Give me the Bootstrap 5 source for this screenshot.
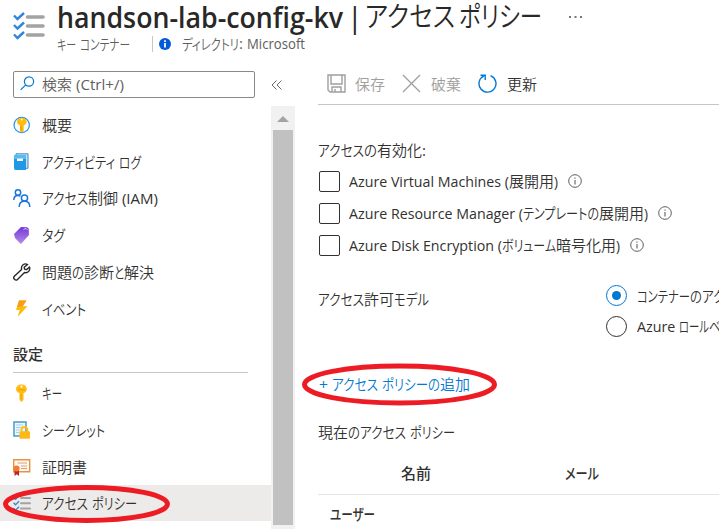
<!DOCTYPE html>
<html lang="ja">
<head>
<meta charset="utf-8">
<title>アクセス ポリシー</title>
<link href="https://cdn.jsdelivr.net/npm/bootstrap@5.3.0/dist/css/bootstrap.min.css" rel="stylesheet">
<style>
body{width:719px;height:529px;overflow:hidden;background:#fff;color:#323130;font:15px/20px "Open Sans","Noto Sans CJK JP",sans-serif}
svg{display:block;flex:none}
.jp{font-family:"Noto Sans CJK JP",sans-serif;font-weight:350}
.run{display:inline-block;white-space:pre;transform-origin:0 50%;font-feature-settings:"palt"}
.line{display:flex;white-space:pre;align-items:center}
.page-head{height:71px;padding-left:13px}
.title-row{height:34px;font-size:28.5px;line-height:34px;color:#292827}
.title-row .jp{margin-top:-5px}
.sub-row{height:18px;font-size:14.5px;line-height:18px;color:#605e5c;padding-top:1px}
.side{width:295px}
.search-box{width:242px;height:27px;border:1px solid #8a8886;border-radius:2px;margin-left:13px;color:#605e5c;padding:0 0 2px 6px}
.menu-area{height:423px;margin-top:8px}
.menu{width:271px}
.item{height:36.8px;padding-left:13px;padding-top:1px}
.item svg{margin-right:11px}
.item.on{background:#edebe9}
.group-name{height:46.4px;margin-left:13px;width:235px;border-bottom:1px solid #c8c6c4;padding-top:10px;margin-bottom:1px}
.track{width:24px;background:#f1f1f1}
.thumb{width:20px;height:395px;background:#c1c1c1}
.pane{width:424px;padding-left:23px}
.tools{height:34px;border-bottom:1px solid #c8c6c4;padding:0 0 8px 9px}
.tools .run{margin-left:9px}
.muted{color:#a19f9d}
.opt{height:32.3px}
.box{width:21px;height:21px;border:1px solid #323130;border-radius:2px;margin-left:1px;margin-right:9px}
.opt .run{margin-top:-1px}
.dot{flex:none;width:21px;height:21px;border:1px solid #323130;border-radius:50%;margin-right:10px}
.dot.sel{border-color:#0078d4}
.dot.sel::after{content:"";width:9px;height:9px;border-radius:50%;background:#0078d4}
.strong{font-weight:600}
.strong .jp{font-weight:500}
.overlay{left:0;top:0;pointer-events:none}
.intro{height:46px;margin-top:22px}
.opts{margin-top:-8px}
.info{margin-left:10px;margin-top:-1px}
.model{margin-top:19px}
.model-name{flex:none;width:288px;height:36px}
.radio-row{height:30.2px}
.add{color:#0078d4;height:20px;margin-top:33px;padding-left:1px}
.now{height:20px;margin-top:28px}
.cols{height:42px;margin-top:11px;padding-left:83px;padding-bottom:1px;border-bottom:1px solid #e5e5e5}
.mail{margin-left:134px}
.users{height:37px;padding-left:12px}
</style>
<script src="https://cdn.jsdelivr.net/npm/bootstrap@5.3.0/dist/js/bootstrap.bundle.min.js"></script>
</head>
<body class="position-relative">
<header class="page-head">
  <div class="d-flex">
    <svg width="32" height="52" viewBox="0 0 32 52"><g fill="none" stroke="#2f86e0" stroke-width="2.4"><path d="M1 15.500l3.500 3.500L11 13M1 25l3.500 3.500L11 22.500M1 34.500l3.500 3.500L11 32"/></g><path d="M14.500 17H30M14.500 26H30M14.500 35H30" stroke="#a3a3a3" stroke-width="3.600" stroke-linecap="round"/></svg>
    <div class="ms-2 ps-1">
      <div class="title-row line"><span class="run strong" data-w="286">handson-lab-config-kv</span><span class="run ms-1" data-w="15.7">|</span><svg width="2" height="1"></svg><span class="run jp" data-w="90">アクセス</span><span class="run jp ms-1" data-w="83">ポリシー</span><svg class="ms-4" width="20" height="4" viewBox="0 0 20 4"><path d="M3 1h2v2H3zM8.500 1h2v2h-2zM14 1h2v2h-2z" fill="#777"/></svg></div>
      <div class="sub-row line"><span class="run jp" data-w="19">キー</span><span class="run jp ms-1" data-w="50">コンテナー</span><svg width="29" height="18" viewBox="0 0 29 18"><path d="M22.500 1v16" stroke="#c8c6c4"/></svg><svg width="12" height="12" viewBox="0 0 12 12"><circle cx="6" cy="6" r="6" fill="#015cda"/><path d="M6 5v4.500M6 2.200v1.800" stroke="#fff" stroke-width="1.800"/></svg><svg width="11" height="1"></svg><span class="run jp" data-w="57">ディレクトリ</span><span class="run" data-w="8">: </span><span class="run" data-w="58">Microsoft</span></div>
    </div>
  </div>
</header>
<div class="d-flex">
<nav class="side">
  <div class="d-flex align-items-center">
    <div class="search-box line"><svg width="15" height="15" viewBox="0 0 15 15" fill="none" stroke="#0078d4" stroke-width="1.200"><circle cx="9" cy="5.500" r="4.600"/><path d="M5.700 8.800L.7 13.800"/></svg><svg width="7" height="1"></svg><span class="run jp" data-w="30">検索</span><span class="run" data-w="52"> (Ctrl+/)</span></div>
    <svg class="ms-3" width="12" height="12" viewBox="0 0 12 12" fill="none" stroke="#69676a"><path d="M5.500 1.500L1 6l4.500 4.500M10.500 1.500L6 6l4.500 4.500"/></svg>
  </div>
  <div class="menu-area d-flex">
    <div class="menu">
      <div class="item line"><svg width="18" height="18" viewBox="0 0 18 18"><circle cx="8.700" cy="9" r="7.700" fill="#f5fbff" stroke="#2e8fe5" stroke-width="1.200"/><path d="M8.700 1.800c3 0 5 1.800 5 4 0 1.900-1.500 3-3 3.700v5.200l-2 2-1.700-2V9.500c-1.500-.6-3-1.800-3-3.700 0-2.200 2-4 4.700-4z" fill="#fdbd0c"/><circle cx="8.700" cy="3.500" r=".9" fill="#fff"/><path d="M8 10v4.500" stroke="#df9300"/></svg><span class="run jp" data-w="30">概要</span></div>
      <div class="item line"><svg width="18" height="18" viewBox="0 0 18 18"><path d="M3 .8h12v14.500H3z" fill="#c5e2f4" stroke="#4388b8"/><path d="M1 2h12v15H2.500Q1 17 1 15z" fill="#2198e6"/><path d="M1 2h12v4H1z" fill="#57baf3"/><path d="M4 5.500h6V8H4z" fill="#fff"/></svg><span class="run jp" data-w="73">アクティビティ</span><span class="run jp ms-1" data-w="22">ログ</span></div>
      <div class="item line"><svg width="18" height="18" viewBox="0 0 18 18" fill="none" stroke="#1975dc" stroke-width="1.500"><circle cx="5" cy="3.500" r="2.700"/><path d="M.8 11c0-3 1.800-4.600 4.200-4.600 1 0 1.700.2 2.400.8"/><circle cx="11.500" cy="9" r="3.100"/><path d="M6.200 18c0-3.500 2-5.700 5.300-5.700s5.300 2.200 5.300 5.700"/></svg><span class="run jp" data-w="46">アクセス</span><span class="run jp" data-w="30">制御</span><span class="run" data-w="40"> (IAM)</span></div>
      <div class="item line"><svg width="18" height="18" viewBox="0 0 18 18"><defs><linearGradient id="tg" x1="0" y1="0" x2="0" y2="1"><stop stop-color="#7337d8"/><stop offset="1" stop-color="#b68ae6"/></linearGradient></defs><path d="M1 8l7-7 6 .2 1.700 1.300.3 6.500-7.600 8.500q-.7.5-1.400-.2L2 12z" fill="url(#tg)"/><path d="M10.500 3.500q3-2.500 4 .5" fill="none" stroke="#d8c2fa"/></svg><span class="run jp" data-w="23">タグ</span></div>
      <div class="item line"><svg width="18" height="18" viewBox="0 0 18 18" fill="none" stroke="#292827" stroke-width="1.400" stroke-linejoin="round"><path d="M14.600 1.500C11.500-.2 7.600 2.200 8.600 6.500L1.300 13.300c-1.800 2 1.200 5 3.200 3.200l7-7c3.300.9 6.100-2.100 5-5.500l-2.800 2.600-2.100-.4-.5-2z"/></svg><span class="run jp" data-w="30">問題</span><span class="run jp" data-w="12">の</span><span class="run jp" data-w="30">診断</span><span class="run jp" data-w="10">と</span><span class="run jp" data-w="30">解決</span></div>
      <div class="item line"><svg width="18" height="18" viewBox="0 0 18 18"><path d="M6 .6h7.500L9.700 6.300h4.800L4.500 17l2.300-7H3z" fill="#fdbc0b"/><path d="M6 .6h7.500L9.700 6.300 4.200 7z" fill="#fa9b19"/></svg><span class="run jp" data-w="44">イベント</span></div>
      <div class="group-name line strong"><span class="run jp" data-w="30">設定</span></div>
      <div class="item line"><svg width="18" height="18" viewBox="0 0 18 18"><path d="M8.500.5c3.200 0 5.300 2 5.300 4.600 0 2.200-1.500 3.500-3.300 4.200V16l-2 2-2-2V9.300C4.700 8.600 3 7.300 3 5.100 3 2.500 5.300.5 8.500.5z" fill="#ffbd16"/><circle cx="8.500" cy="2.500" r="1.100" fill="#fff"/><path d="M5 5.800h7M8 10v5.500" stroke="#e9a000"/></svg><span class="run jp" data-w="20">キー</span></div>
      <div class="item line"><svg width="18" height="18" viewBox="0 0 18 18"><path d="M1 1h12v14H1z" fill="#eaf6fb" stroke="#469cc7" stroke-width="1.500"/><path d="M3 4h7M3 6.500h7M3 9h4M3 11.500h3" stroke="#a6d2e6"/><path d="M8.500 11V9c0-4 6-4 6 0v2" fill="none" stroke="#ffbe14" stroke-width="1.800"/><rect x="6.500" y="10.300" width="10.500" height="7.500" rx="1" fill="#ffb913"/></svg><span class="run jp" data-w="63">シークレット</span></div>
      <div class="item line"><svg width="18" height="18" viewBox="0 0 18 18"><path d="M.7 1.700h16v12h-16z" fill="#fff8f0" stroke="#e79440" stroke-width="1.400"/><path d="M4.500 5H14M8 8h6M8 10.500h6" stroke="#dd9e7b" stroke-width="1.200"/><path d="M1.500 12H6v6l-2.200-1.700L1.500 18z" fill="#b72824"/><circle cx="3.600" cy="10.500" r="3" fill="#f47a38"/></svg><span class="run jp" data-w="45">証明書</span></div>
      <div class="item on line"><svg width="18" height="18" viewBox="0 0 18 18"><path d="M.5 3.300l2 2 3.600-3.600M.5 8.800l2 2 3.600-3.600M.5 14.300l2 2 3.600-3.600" fill="none" stroke="#2e8be5" stroke-width="1.300"/><path d="M8 4h9M8 9.300h9M8 14.600h9" stroke="#a3a3a3" stroke-width="2" stroke-linecap="round"/></svg><span class="run jp" data-w="46">アクセス</span><span class="run jp ms-1" data-w="45">ポリシー</span></div>
    </div>
    <div class="track d-flex flex-column align-items-center"><svg width="24" height="24" viewBox="0 0 24 24"><path d="M6 16l6-6 6 6z" fill="#a3a3a3"/></svg><div class="thumb"></div></div>
  </div>
</nav>
<main class="pane">
  <div class="tools line">
    <svg width="19" height="19" viewBox="0 0 19 19" fill="none" stroke="#a19f9d" stroke-width="1.400"><path d="M1 1h17v17H3l-2-2zM4 1v9h11V1M5 18v-5h9v5M8 15v3"/></svg><span class="run jp muted" data-w="30">保存</span>
    <svg class="ms-3" width="20" height="19" viewBox="0 0 20 19" stroke="#a19f9d" stroke-width="1.300"><path d="M2 1l17 17M19 1L2 18"/></svg><svg width="1" height="1"></svg><span class="run jp muted" data-w="30">破棄</span>
    <svg class="ms-3" width="20" height="19" viewBox="0 0 20 19" fill="none" stroke="#0078d4" stroke-width="1.400"><path d="M13.500 1.700A8.500 8.500 0 1 1 7 1.900M3.500 1.200h4.700v4.700"/></svg><svg width="1" height="1"></svg><span class="run jp" data-w="30">更新</span>
  </div>
  <div class="line intro"><span class="run jp" data-w="46">アクセス</span><span class="run jp" data-w="13">の</span><span class="run jp" data-w="45">有効化</span><span class="run" data-w="4">:</span></div>
  <div class="opts">
    <div class="opt line"><span class="box"></span><span class="run" data-w="160">Azure Virtual Machines (</span><span class="run jp" data-w="45">展開用</span><span class="run" data-w="4">)</span><svg class="info" width="14" height="14"><use href="#info"/></svg></div>
    <div class="opt line"><span class="box"></span><span class="run" data-w="174">Azure Resource Manager (</span><span class="run jp" data-w="76">テンプレートの</span><span class="run jp" data-w="45">展開用</span><span class="run" data-w="4">)</span><svg class="info" width="14" height="14"><use href="#info"/></svg></div>
    <div class="opt line"><span class="box"></span><span class="run" data-w="153">Azure Disk Encryption (</span><span class="run jp" data-w="54">ボリューム</span><span class="run jp" data-w="60">暗号化用</span><span class="run" data-w="4">)</span><svg class="info" width="14" height="14"><use href="#info"/></svg></div>
  </div>
  <div class="d-flex model">
    <div class="line model-name"><span class="run jp" data-w="46">アクセス</span><span class="run jp" data-w="30">許可</span><span class="run jp" data-w="35">モデル</span></div>
    <div>
      <div class="line radio-row"><span class="dot sel d-flex align-items-center justify-content-center"></span><span class="run jp" data-w="53">コンテナー</span><span class="run jp" data-w="12">の</span><span class="run jp" data-w="46">アクセス</span></div>
      <div class="line radio-row"><span class="dot"></span><span class="run" data-w="42">Azure </span><span class="run jp" data-w="30">ロール</span><span class="run jp" data-w="34">ベース</span></div>
    </div>
  </div>
  <a class="line add text-decoration-none" href="#"><span class="run" data-w="13">+ </span><span class="run jp" data-w="46">アクセス</span><span class="run jp ms-1" data-w="46">ポリシー</span><span class="run jp" data-w="12">の</span><span class="run jp" data-w="30">追加</span></a>
  <div class="line now"><span class="run jp" data-w="30">現在</span><span class="run jp" data-w="12">の</span><span class="run jp" data-w="46">アクセス</span><span class="run jp ms-1" data-w="45">ポリシー</span></div>
  <div class="line cols strong"><span class="run jp" data-w="30">名前</span><span class="run jp mail" data-w="34">メール</span></div>
  <div class="line users strong"><span class="run jp" data-w="45">ユーザー</span></div>
</main>
</div>
<svg class="position-absolute overlay" width="719" height="529" fill="none" stroke="#ed1c24" stroke-width="5"><ellipse cx="399.500" cy="384.500" rx="95" ry="18.500"/><ellipse cx="86.500" cy="504" rx="81" ry="16.500"/></svg>
<svg width="0" height="0"><symbol id="info" viewBox="0 0 14 14"><circle cx="7" cy="7" r="6.300" fill="none" stroke="#605e5c"/><path d="M7 6v4.500M7 3.500v1.300" stroke="#605e5c" stroke-width="1.100"/></symbol></svg>
<script>
// Condense or widen every text run to its set width.
document.querySelectorAll('.run').forEach(function(e){
  e.style.flex='none';
  var n=e.getBoundingClientRect().width, w=+e.dataset.w;
  e.style.transform='scaleX('+w/n+')';
  e.style.marginRight=(w-n)+'px';
});
</script>
</body>
</html>
